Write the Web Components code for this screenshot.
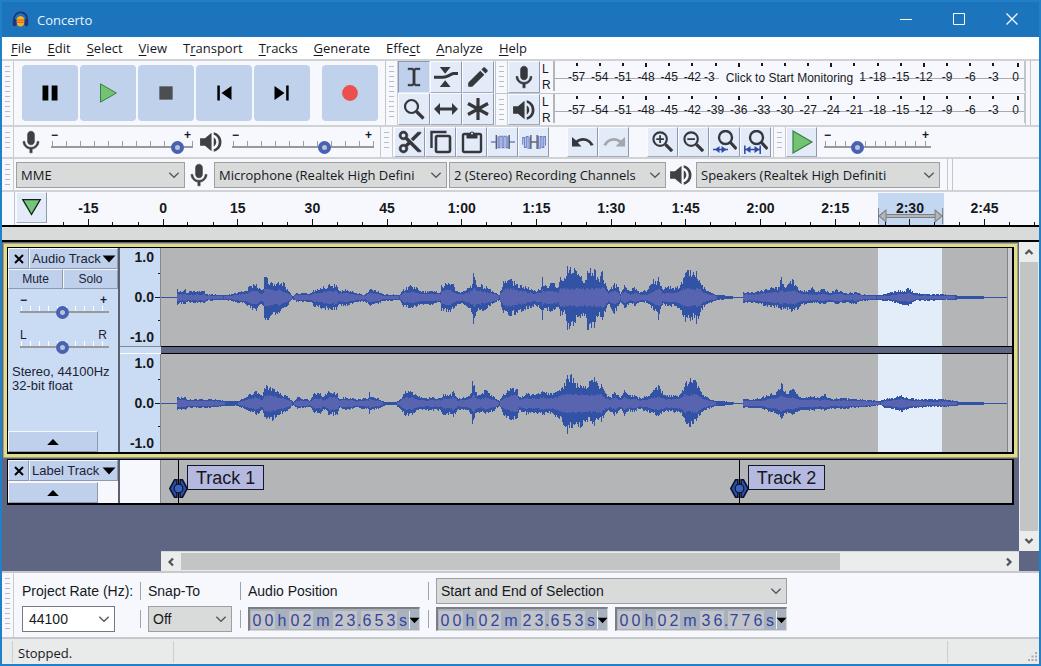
<!DOCTYPE html>
<html lang="en">
<head>
<meta charset="utf-8">
<title>Concerto</title>
<style>
  html, body { margin: 0; height: 100%; }
  body { font: 14px/18px "Liberation Sans", Arial, sans-serif; color: #16181c; }
</style>
</head>
<body>
<concerto-app></concerto-app>

<script>
const UI_FONT = '"Open Sans", "Noto Sans", sans-serif';

/* ---------- icons ---------- */
const box = (inner, vb = '0 0 24 24') => `<svg viewBox="${vb}" fill="currentColor" aria-hidden="true">${inner}</svg>`;
const ICONS = {
  logo: box('<path d="M2.500 14C2.500 6 6.500 2 12 2s9.500 4 9.500 12" fill="none" stroke="#26346f" stroke-width="2.600"/><ellipse cx="12" cy="14.500" rx="6" ry="7.500" fill="#f5b31f"/><path d="M7 13h10M7 16h10" fill="none" stroke="#e8632a" stroke-width="1.800"/><rect x="1" y="11" width="5.500" height="10.500" rx="2.700" fill="#26346f"/><rect x="17.500" y="11" width="5.500" height="10.500" rx="2.700" fill="#26346f"/>'),
  pause: box('<path d="M3 3h7v18H3zM14 3h7v18h-7z"/>'),
  play: box('<path d="M3 1L22 12 3 23z" fill="#72c472" stroke="#3c7d45" stroke-width="1.200"/>'),
  stop: box('<path d="M4 4h16v16H4z" fill="#4b4f52"/>'),
  start: box('<path d="M4 3h3v18H4zM21 3.500v17L9 12z"/>'),
  end: box('<path d="M17 3h3v18h-3zM3 3.500v17l12-8.500z"/>'),
  record: box('<circle cx="12" cy="12" r="9.500" fill="#e9504e"/>'),
  ibeam: box('<path d="M6 3h4.500l1.500 1 1.500-1H18v1.800h-4L13.200 5.500v13l.8.7H18V21h-4.500L12 20l-1.500 1H6v-1.800h4l.8-.7v-13L10 4.800H6z" stroke="currentColor" stroke-width=".4"/>'),
  envelope: box('<path d="M5 0h13L11.500 8zM5 24h13L11.500 16zM-2 10.500H9c5 0 7-3 12-4.500h6v3.500h-5c-5 1.500-7 4.500-13 4.500H-2z"/>', '-2 0 29 24'),
  pencil: box('<path d="M3 17.250V21h3.750L17.810 9.940l-3.750-3.750L3 17.250zM20.710 7.040c.39-.39.39-1.020 0-1.410l-2.340-2.340c-.39-.39-1.020-.39-1.410 0l-1.830 1.830 3.750 3.750 1.830-1.830z"/>', '1 1 22 22'),
  zoom: box('<circle cx="9.500" cy="9.500" r="6.500" fill="none" stroke="currentColor" stroke-width="2.200"/><path d="M14.500 14.500l7 7" stroke="currentColor" stroke-width="3.200"/>'),
  shift: box('<path d="M0 12l6-6v4.500h12V6l6 6-6 6v-4.500H6V18z"/>'),
  multi: box('<path d="M12 1v22M2 6.500l20 11M2 17.500l20-11" stroke="currentColor" stroke-width="3.200" fill="none"/>'),
  mic: box('<path d="M12 14c1.660 0 2.990-1.340 2.990-3L15 5c0-1.660-1.340-3-3-3S9 3.340 9 5v6c0 1.660 1.340 3 3 3zm5.300-3c0 3-2.540 5.100-5.300 5.100S6.700 14 6.700 11H5c0 3.410 2.720 6.230 6 6.720V21h2v-3.280c3.280-.48 6-3.300 6-6.720h-1.700z" stroke="currentColor" stroke-width=".5"/>', '2 1 20 21'),
  speaker: box('<path d="M2 8.500v7h4.500l6 5V3.500l-6 5H2zm14.800 3.500c0-1.770-.8-3.290-2.300-4.030v8.050c1.500-.73 2.300-2.250 2.300-4.020zM14.500 3v2.300c2.900.86 4.600 3.530 4.600 6.700s-1.700 5.850-4.600 6.700V21c4.200-.91 7.100-4.490 7.100-9s-2.900-8.100-7.100-9z"/>', '1 1 22 22'),
  cut: box('<path d="M9.640 7.640c.23-.5.36-1.050.36-1.640 0-2.210-1.790-4-4-4S2 3.790 2 6s1.790 4 4 4c.59 0 1.140-.13 1.640-.36L10 12l-2.360 2.360C7.140 14.130 6.590 14 6 14c-2.210 0-4 1.790-4 4s1.790 4 4 4 4-1.790 4-4c0-.59-.13-1.140-.36-1.640L12 14l7 7h3v-1L9.640 7.640zM6 8c-1.100 0-2-.89-2-2s.9-2 2-2 2 .89 2 2-.9 2-2 2zm0 12c-1.100 0-2-.89-2-2s.9-2 2-2 2 .89 2 2-.9 2-2 2zM19 3l-6 6 2 2 7-7V3z" stroke="currentColor" stroke-width=".6"/>', '1 1 22 22'),
  copy: box('<path d="M2.500 18V2h15" fill="none" stroke="currentColor" stroke-width="2.400"/><rect x="7" y="6" width="14" height="16" rx="1.500" fill="none" stroke="currentColor" stroke-width="2.600"/>', '1 0 22 24'),
  paste: box('<rect x="3" y="4" width="18" height="18" rx="1.500" fill="none" stroke="currentColor" stroke-width="2.400"/><path d="M6.500 3.500H9.500a2.600 2.600 0 0 1 5 0H17.500V8.500H6.500z"/><circle cx="12" cy="3.500" r="1" fill="#e3ebf8"/>', '1 0 22 24'),
  trim: box('<path d="M0 12h6M20 12h7" stroke="#6f82c8" stroke-width="1.600"/><path d="M8 5.500v13h2v-13h2.500v13h2v-13h2.500v13h2v-13" fill="none" stroke="#6578c2" stroke-width="1.300"/><path d="M6 4v16M20.500 4v16" stroke="#596072" stroke-width="1.600"/>', '0 0 27 24'),
  silence: box('<path d="M10 12h7" stroke="#596072" stroke-width="1.600"/><path d="M.8 15V7h2v11h2V6h2v13h2V6M18.500 5v14h2V6h2v12h2V6h2v10" fill="none" stroke="#6f82c8" stroke-width="1.300"/><path d="M10 4v16M17 4v16" stroke="#596072" stroke-width="1.600"/>', '0 0 27 24'),
  undo: box('<path d="M12.500 8c-2.650 0-5.050.99-6.900 2.600L1.500 7v9.500h9.500l-3.620-3.820c1.390-1.160 3.160-1.880 5.120-1.880 3.540 0 6.550 1.810 7.600 5l3-.9C21.080 11.030 17.150 8 12.500 8z"/>', '1 0 23 24'),
  redo: box('<path transform="translate(25 0) scale(-1 1)" fill="#a3a7a9" d="M12.500 8c-2.650 0-5.050.99-6.900 2.600L1.500 7v9.500h9.500l-3.620-3.820c1.390-1.160 3.160-1.880 5.120-1.880 3.540 0 6.550 1.810 7.600 5l3-.9C21.080 11.030 17.150 8 12.500 8z"/>', '1 0 23 24'),
  zoomin: box('<circle cx="9.500" cy="9.500" r="7" fill="none" stroke="currentColor" stroke-width="2.200"/><path d="M15 15l7 7" stroke="currentColor" stroke-width="3.400"/><path d="M5.500 9.500h8M9.500 5.500v8" stroke="currentColor" stroke-width="1.800"/>', '0 0 25 25'),
  zoomout: box('<circle cx="9.500" cy="9.500" r="7" fill="none" stroke="currentColor" stroke-width="2.200"/><path d="M15 15l7 7" stroke="currentColor" stroke-width="3.400"/><path d="M5.500 9.500h8" stroke="currentColor" stroke-width="1.800"/>', '0 0 25 25'),
  zoomsel: box('<circle cx="12.500" cy="8.500" r="6.500" fill="none" stroke="currentColor" stroke-width="2.400"/><path d="M17 13l6.500 7" stroke="currentColor" stroke-width="3.200"/><path d="M0 20.500h15" stroke="#2f4aa5" stroke-width="1.500"/><path d="M6.500 17v7L2 20.500zM8.500 17v7l5-3.500z" fill="#2f4aa5"/>', '0 1 24 24'),
  zoomfit: box('<circle cx="12.500" cy="8.500" r="6.500" fill="none" stroke="currentColor" stroke-width="2.400"/><path d="M17 13l6.500 7" stroke="currentColor" stroke-width="3.200"/><path d="M1 20.500h15M.8 16.500V25M16.200 16.500V25" stroke="#2f4aa5" stroke-width="1.500"/><path d="M1.500 20.500l5-3.500v7zM15.500 20.500l-5-3.500v7z" fill="#2f4aa5"/>', '0 1 24 24'),
  pin: box('<path d="M2 3h20L12 20z" fill="#74c67a" stroke="#17221a" stroke-width="1.500"/>'),
  chevron: box('<path d="M5 8.500l7 7 7-7" fill="none" stroke="#55585b" stroke-width="2"/>'),
  up: box('<path d="M2 17h20L12 7z"/>'),
  down: box('<path d="M1 6h22L12 18z"/>'),
  close: box('<path d="M4 4l16 16M20 4L4 20" stroke="currentColor" stroke-width="4" fill="none"/>'),
  winmin: box('<path d="M6 11.500h12" stroke="#fff" stroke-width="1"/>'),
  winmax: box('<path d="M6.500 5.500h11v11h-11z" fill="none" stroke="#fff" stroke-width="1"/>'),
  winclose: box('<path d="M6.500 5.500l11 11M17.500 5.500l-11 11" stroke="#fff" stroke-width="1.200"/>'),
  arrow: box('<path d="M5 16l7-7 7 7" fill="none" stroke="#505357" stroke-width="4.500"/>'),
  marker: box('<path d="M7 1L1 12l6 11h3V1zM14 1h3l6 11-6 11h-3z" fill="#2c4fa6" stroke="#0c1330" stroke-width="2"/><circle cx="12" cy="12" r="5.500" fill="#3a62b8" stroke="#0c1330" stroke-width="1.500"/>')
};

/* Registers an element whose shadow root is cloned from a template built out of css + html. */
function define(name, css, html) {
  const dynamic = typeof html === 'function';
  const make = markup => {
    const t = document.createElement('template');
    t.innerHTML = `<style>*{box-sizing:border-box}:host{box-sizing:border-box}button,select,input{font:inherit;color:inherit;margin:0}button{padding:0;border:0;background:none}${css}</style>${markup}`;
    return t;
  };
  const shared = dynamic ? null : make(html);
  customElements.define(name, class extends HTMLElement {
    connectedCallback() {
      if (this.shadowRoot) return;
      const root = this.attachShadow({ mode: 'open' });
      root.append((shared || make(html(this))).content.cloneNode(true));
    }
  });
}

define('app-icon', ':host{display:block;flex:none;width:24px;height:24px}svg{display:block;width:100%;height:100%}',
  el => ICONS[el.getAttribute('name')]);

/* ---------- title and menus ---------- */
define('title-bar', `
  :host{display:flex;align-items:center;height:35px;background:#1c75bc;color:#e9f3fb;font:13px/20px ${UI_FONT};padding-left:10px}
  h1{font:inherit;margin:0 0 0 8px;flex:1}
  .logo{width:17px;height:17px}
  button{width:53px;height:35px;display:grid;place-items:center}
  button:last-child{margin-right:1px}`,
  `<app-icon class="logo" name="logo"></app-icon><h1><slot></slot></h1>
   <button aria-label="Minimize"><app-icon name="winmin"></app-icon></button>
   <button aria-label="Maximize"><app-icon name="winmax"></app-icon></button>
   <button aria-label="Close"><app-icon name="winclose"></app-icon></button>`);

define('menu-bar', `
  :host{display:block;background:#fff;font:13px/20px ${UI_FONT}}
  nav{display:flex;gap:16px;height:22px;padding-left:9px}
  u{text-underline-offset:2px}`,
  `<nav>${['File','Edit','Select','View','Transport','Tracks','Generate','Effect','Analyze','Help'].map(t => {
    const i = { Transport: 1, Effect: 4 }[t] || 0;
    return `<button>${t.slice(0, i)}<u>${t[i]}</u>${t.slice(i + 1)}</button>`;
  }).join('')}</nav>`);

/* ---------- toolbars ---------- */
define('tool-bar', `
  :host{display:flex;align-items:stretch;border-left:1px solid #c3c5c8}
  .grip{flex:none;width:12px;border-right:1px solid #c9cbce;padding:5px 3px}
  .grip i{display:block;height:100%;background:repeating-linear-gradient(#b9bcc1 0 1px,transparent 1px 5px)}
  .body{flex:1;min-width:0;display:flex;align-items:center}`,
  '<div class="grip"><i></i></div><div class="body"><slot></slot></div>');

define('tool-button', `
  :host{display:block;flex:none;width:31px;height:100%}
  button{width:100%;height:100%;display:grid;place-items:center;color:#34383c;background:#e3ebf8;border:1px solid #f8fbff;border-right-color:#8f98ad;border-bottom-color:#a2aabb}
  :host([pressed]) button{background:#bfd0ec;border-color:#8f98ad #dfe8f5 #dfe8f5 #8f98ad}
  :host([big]){width:56px;height:56px}
  :host([big]) button{background:#c0d1ec;border:0;border-radius:4px;color:#000}
  app-icon{width:var(--icon,24px);height:var(--icon,24px)}`,
  el => `<button aria-label="${el.getAttribute('label')}"><app-icon name="${el.getAttribute('icon')}"></app-icon></button>`);

define('tick-slider', `
  :host{display:block;flex:0 1 auto;height:24px;font:bold 12px/10px "Liberation Sans",Arial,sans-serif;--tick:#9b9da0;--step:14px}
  :host([low]){font-weight:normal}
  .ends{display:flex;justify-content:space-between;height:11px;padding:0 2px 0 0}
  input{display:block;appearance:none;width:100%;height:13px;background:linear-gradient(90deg,var(--tick) 1px,transparent 1px) 1px 0/var(--step) 6px repeat-x}
  input::-webkit-slider-runnable-track{height:13px;background:linear-gradient(#97999c,#97999c) 0 5px/100% 2px no-repeat}
  input::-webkit-slider-thumb{appearance:none;width:13px;height:13px;border-radius:50%;border:4px solid #4861b0;background:#b8c1da}`,
  el => `<div class="ends" aria-hidden="true"><span>${el.getAttribute('low') || '−'}</span><span>${el.getAttribute('high') || '+'}</span></div>
   <input type="range" min="0" max="100" value="${el.getAttribute('value')}" aria-label="${el.getAttribute('label')}">`);

define('drop-down', `
  :host{display:flex;flex-direction:column;min-width:0}
  label{display:block;height:26px;line-height:26px;margin-bottom:2px;white-space:nowrap}
  .field{display:grid;align-items:center;height:26px;background:#d9dada;border:1px solid #9d9fa1}
  .field>*{grid-area:1/1}
  select{appearance:none;width:100%;height:24px;min-width:0;padding:0 20px 0 4px;border:0;background:none;border-radius:0;text-overflow:ellipsis}
  app-icon{width:16px;height:16px;justify-self:end;margin-right:2px;pointer-events:none}
  :host([editable]) .field{background:#fff;border-color:#77797c;width:93px}
  :host([editable]) select{padding-left:6px}`,
  el => `${el.hasAttribute('label') ? `<label for="s">${el.getAttribute('label')}</label>` : ''}
   <div class="field"><select id="s" aria-label="${el.getAttribute('label') || el.getAttribute('name')}"><option>${el.getAttribute('value')}</option></select><app-icon name="chevron"></app-icon></div>`);

define('level-meter', `
  :host{display:flex;flex:1;min-width:0;height:100%;font-size:12px;line-height:16px}
  .lr{width:13px;padding-left:2px;display:flex;flex-direction:column;justify-content:space-between}
  .lr span{height:16px}
  .scale{position:relative;flex:1;min-width:0;display:grid;grid-template-columns:repeat(19,minmax(0,1fr)) 14px;padding:0 5px 0 10px;border-left:2px solid #b4b6b9;border-right:1px solid #c3c5c8;
    background:linear-gradient(#a9abae,#a9abae) 0 17px/100% 1px no-repeat;margin:0 0 2px}
  .scale span{display:flex;flex-direction:column;align-items:center;gap:3px;padding-top:2px;white-space:nowrap}
  .scale span:last-of-type{align-items:flex-end}
  .scale span::before{content:"";width:2px;height:4px;background:#16181c}
  .scale span:nth-of-type(even)::before,.scale span:nth-of-type(4n+3)::before,.scale span:nth-of-type(4n+1)::before{height:3px;margin-bottom:1px}
  .scale span:nth-of-type(4n)::before{height:4px;margin-bottom:0}
  .scale .cut{align-items:flex-start}
  .scale .cut::before{align-self:center}
  .scale .cut.r b{align-self:flex-end}
  b{font-weight:400}
  .scale b{line-height:14px;height:14px}
  button{position:absolute;left:35%;top:8px;width:30%;height:18px;background:#f6f8fd;white-space:nowrap}`,
  el => {
    /* The idle prompt covers the middle of the scale; only the outer halves of the labels at its edges show. */
    const idle = el.hasAttribute('idle');
    const covered = { 6: '-3', 7: '', 8: '', 9: '', 10: '', 11: '', 12: '1' };
    const cell = i => {
      const part = idle && i in covered;
      return `<span class="${part ? 'cut ' + (i === 12 ? 'r' : '') : ''}"><b>${part ? covered[i] : i === 19 ? 0 : i * 3 - 57}</b></span>`;
    };
    return `<div class="lr"><span>L</span><span>R</span></div>
   <div class="scale">${Array.from({ length: 20 }, (_, i) => cell(i)).join('')}
   ${idle ? '<button>Click to Start Monitoring</button>' : ''}</div>`;
  });

define('time-ruler', `
  :host{display:block;position:relative;flex:1;min-width:0;height:33px;overflow:hidden;font-weight:bold;padding-left:3px}
  .cells{display:flex;height:100%}
  .cells span{flex:0 0 7.56%;text-align:center;padding-top:7px;position:relative;
    background:
     linear-gradient(#16181c,#16181c) 50% 100%/1px 6px no-repeat,
     linear-gradient(#16181c,#16181c) 16.600% 100%/1px 3px no-repeat,
     linear-gradient(#16181c,#16181c) 83.400% 100%/1px 3px no-repeat}
  .sel{position:absolute;left:83.800%;width:6.570%;top:1px;bottom:0;background:#c4d7f0}
  .sel svg{position:absolute;left:0;bottom:1px;width:100%;height:16px}`,
  `<div class="sel"><svg viewBox="0 0 65 16" preserveAspectRatio="none" fill="#b4b6b8" stroke="#7c7f83"><path d="M.5 0v16M64.500 0v16"/><path d="M7 6.500h51v3H7z"/><path d="M1 8l7-6v12zM64 8l-7-6v12z"/></svg></div>
   <div class="cells">${['-15','0','15','30','45','1:00','1:15','1:30','1:45','2:00','2:15','2:30','2:45',''].map(t => `<span>${t}</span>`).join('')}</div>`);

/* ---------- tracks ---------- */
/* Envelopes: [x, peak above the axis, peak below it] in view units. */
const E1 = '0,0,0 15,0,0 16,8,7 18,5,5 24,8,6 26,4,4 29,6,5 43,6,5 45,3,3 62,2,2 71,3,3 77,5,5 84,6,6 89,11,10 95,13,13 99,8,6 102,8,8 103,20,20 106,19,22 111,14,16 116,14,16 122,15,10 126,8,8 131,1,1 135,4,4 149,4,4 152,7,8 159,9,10 167,12,12 175,12,12 177,7,7 184,8,8 191,6,6 195,4,4 204,3,4 209,8,8 217,6,6 221,3,3 238,2,2 242,8,9 249,12,10 255,10,9 259,6,6 269,6,7 279,5,5 280,12,13 287,14,14 292,13,11 295,6,8 301,5,5 307,9,10 311,13,16 312,24,26 313,20,20 315,12,14 321,12,13 329,8,8 338,2,2 342,16,15 349,18,18 356,13,15 364,11,12 374,6,7 380,10,12 381,20,22 382,11,12 391,14,13 397,10,9 399,20,18 404,18,16 406,31,32 409,30,28 414,27,25 419,20,20 424,17,16 426,26,32 433,28,30 437,18,18 441,26,22 444,14,14 447,6,6 453,14,16 457,10,8 459,3,4 463,12,10 469,6,5 473,10,8 479,5,4 486,7,5 492,18,12 496,16,14 497,20,22 501,8,7 507,11,8 514,10,8 519,12,12 524,24,24 529,27,23 533,22,20 535,26,26 539,14,14 544,8,7 551,4,4 556,2,2 561,2,2 569,1,1 575,0,0 581,0,0 582,5,5 594,5,5 604,8,8 609,9,9 617,10,10 620,20,12 624,9,11 631,18,13 636,10,12 639,7,8 645,6,6 651,10,5 655,5,5 662,8,6 669,4,4 675,8,6 684,4,5 695,5,6 699,3,3 715,2,2 723,3,3 729,5,3 739,7,6 743,6,7 747,9,8 754,4,3 764,3,3 784,3,2 794,2,2 799,1,1 822,1,1 823,0,0 846,0,0';
const E2 = '0,0,0 15,0,0 16,6,6 24,6,6 27,3,3 29,4,4 49,4,4 64,2,2 76,2,2 79,3,3 89,9,8 95,12,11 101,7,6 103,15,13 106,17,14 111,15,17 119,10,10 126,7,7 132,1,1 136,6,5 149,3,3 152,9,8 159,10,10 162,6,5 167,12,11 176,10,11 178,4,4 184,6,6 191,5,5 195,3,3 202,5,5 207,5,5 208,11,10 210,6,6 217,5,5 222,2,2 226,1,1 234,1,1 239,4,5 244,12,12 251,11,11 256,7,6 264,5,6 272,6,7 279,5,6 282,9,11 289,9,10 292,12,13 296,5,6 305,6,6 310,10,10 311,22,20 313,18,14 314,11,9 319,8,8 324,13,10 332,7,7 338,2,2 342,9,11 349,15,16 356,14,14 358,6,6 365,10,11 374,8,8 381,12,11 387,10,9 393,10,11 397,12,14 401,16,18 403,20,22 406,28,30 410,29,24 414,20,20 419,18,24 424,17,18 429,22,17 433,26,22 437,17,16 440,19,18 444,10,9 449,6,8 453,11,12 457,8,7 459,5,5 463,13,12 467,8,7 471,8,8 479,5,5 489,9,9 497,18,12 504,8,7 512,8,8 519,9,9 524,20,18 529,25,23 532,23,20 535,21,17 539,12,11 545,6,6 551,3,3 555,2,2 561,2,2 570,1,1 575,0,0 581,0,0 582,4,4 594,4,4 601,6,5 609,9,8 615,11,10 620,20,15 625,9,10 631,14,11 639,6,6 647,6,6 653,7,7 657,5,5 663,9,7 670,4,5 679,5,5 694,4,4 709,3,3 719,2,1 723,4,4 731,5,5 740,8,8 746,5,5 754,4,4 765,4,3 784,4,3 796,2,2 797,1,1 822,1,1 823,0,0 846,0,0';

function envelopePaths(data, seed) {
  const pts = data.split(' ').map(p => p.split(',').map(Number));
  let s = seed, k = 0;
  const rnd = () => (s = (s * 16807) % 2147483647) / 2147483647;
  const col = { peak: '', rms: '' };
  for (let x = 0; x < 846; x++) {
    while (pts[k + 1][0] <= x && k < pts.length - 2) k++;
    const [a, b] = [pts[k], pts[k + 1]], t = Math.min(1, (x - a[0]) / (b[0] - a[0]));
    const mix = i => a[i] + (b[i] - a[i]) * t;
    const jag = () => x === a[0] ? 1 : 0.72 + rnd() * 0.36;
    const u = mix(1), d = mix(2);
    const up = Math.round(u * jag()), dn = Math.round(d * jag());
    col.peak += `M${x} ${49 - up}h1v${up + dn + 1}h-1z`;
    if (u > 2) {
      const r = Math.round(Math.min(u, d, 17) * (0.42 + rnd() * 0.14));
      col.rms += `M${x} ${49 - r}h1v${2 * r + 1}h-1z`;
    }
  }
  return col;
}

define('wave-channel', `
  :host{display:block;height:98px;background:#b3b5b6}
  svg{display:block;width:100%;height:98px}`,
  el => {
    const p = envelopePaths(el.getAttribute('data') === '2' ? E2 : E1, el.getAttribute('data') === '2' ? 911 : 337);
    return `<svg viewBox="0 0 851 98" preserveAspectRatio="none" shape-rendering="crispEdges" role="img" aria-label="Waveform">
      <rect x="717" width="64" height="98" fill="#e3ecf9"/><rect x="847" width="4" height="98" fill="#cdccd0"/>
      <path d="M846 0h1v98h-1z" fill="#808285"/><path d="${p.peak}" fill="#3252a6"/><path d="${p.rms}" fill="#5964b0"/></svg>`;
  });

define('level-ruler', `
  :host{display:flex;flex-direction:column;justify-content:space-between;height:98px;font-weight:bold;text-align:right;padding-right:6px;border-right:1px solid #85898e;
    background:linear-gradient(#16181c,#16181c) 100% 49px/5px 1px no-repeat,linear-gradient(#16181c,#16181c) 100% 25px/2px 1px no-repeat,linear-gradient(#16181c,#16181c) 100% 72px/2px 1px no-repeat,#cadcf3}`,
  '<span>1.0</span><span>0.0</span><span>-1.0</span>');

define('track-head', `
  :host{display:flex;flex-direction:column;background:#cadcf3;border-right:2px solid #5b6070;font-size:12px;line-height:16px;color:#1c2233}
  .row{display:flex;height:21px;flex:none}
  button{display:flex;align-items:center;justify-content:center;background:#bfd0ec;border:1px solid #f4f8fd;border-right-color:#8f98ad;border-bottom-color:#8f98ad;height:100%}
  .x{width:21px}
  .name{flex:1;justify-content:space-between;padding:0 1px 0 2px;white-space:nowrap;font-size:13px}
  .collapse{width:90px;height:21px;margin-top:auto;flex:none}
  app-icon{width:12px;height:12px;color:#000}
  .name app-icon,.collapse app-icon{width:14px;height:14px}`,
  `<div class="row"><button class="x" aria-label="Close track"><app-icon name="close"></app-icon></button>
   <button class="name"><slot name="title"></slot><app-icon name="down"></app-icon></button></div>
   <slot></slot><button class="collapse" aria-label="Collapse"><app-icon name="up"></app-icon></button>`);

define('audio-track', `
  :host{display:block;border:1px solid #a3a274;background:#e0dc8e;padding:3px}
  .frame{display:grid;grid-template-columns:112px 41px minmax(0,1fr);border:solid #000;border-width:1px 2px 2px 1px}
  .split{height:8px;background:#5f6684;border:solid #000;border-width:1px 0}
  .gap{height:8px;background:#cadcf3;border-top:1px solid #85898e;border-bottom:1px solid #fff}
  .ms{display:flex;height:20px;flex:none}
  .ms button{flex:1;background:#bfd0ec;border:1px solid #f4f8fd;border-right-color:#8f98ad;border-bottom-color:#8f98ad}
  tick-slider{margin:6px 9px 0 12px;--tick:#fff;--step:9px}
  tick-slider+tick-slider{margin-top:11px}
  p{margin:11px 0 0 4px;line-height:14px;font-size:13px;white-space:nowrap}`,
  `<div class="frame"><track-head><span slot="title">Audio Track</span>
     <div class="ms"><button>Mute</button><button>Solo</button></div>
     <tick-slider label="Gain" value="47"></tick-slider>
     <tick-slider label="Pan" low="L" high="R" value="47"></tick-slider>
     <p>Stereo, 44100Hz<br>32-bit float</p></track-head>
   <div><level-ruler></level-ruler><div class="gap"></div><level-ruler></level-ruler></div>
   <div><wave-channel data="1"></wave-channel><div class="split"></div><wave-channel data="2"></wave-channel></div></div>`);

define('text-label', `
  :host{position:absolute;top:0;bottom:0;display:flex;align-items:flex-start;transform:translateX(-8px)}
  .pin{width:17px;height:100%;position:relative;background:linear-gradient(#000,#000) 8px 0/1px 100% no-repeat}
  app-icon{width:19px;height:21px;position:absolute;left:-1px;top:18px}
  .txt{margin-top:5px;height:25px;padding:0 8px;border:1px solid #111628;background:#b5b9e0;font-size:18px;line-height:24px;white-space:nowrap}`,
  '<div class="pin"><app-icon name="marker"></app-icon></div><div class="txt"><slot></slot></div>');

define('label-track', `
  :host{display:block;margin:1px 4px 0}
  .frame{display:grid;grid-template-columns:112px 41px minmax(0,1fr);height:46px;border:solid #000;border-width:1px 2px 2px 1px}
  track-head{background:#f6f8fd}
  .blank{background:#f6f8fd;border-right:1px solid #85898e}
  .lane{position:relative;background:#b3b5b6}`,
  `<div class="frame"><track-head><span slot="title">Label Track</span></track-head><div class="blank"></div>
   <div class="lane"><text-label style="left:2%">Track 1</text-label><text-label style="left:67.900%">Track 2</text-label></div></div>`);

define('scroll-bar', `
  :host{display:flex;background:#ebecec}
  :host([vertical]){flex-direction:column}
  button{flex:none;width:20px;height:20px;display:grid;place-items:center}
  app-icon{width:12px;height:12px}
  .thumb{background:#c3c5c5;flex:0 0 auto}
  .track{flex:1;display:flex;padding:1px 0}
  .track .thumb{width:80.600%}
  :host([vertical]) .track{padding:0 1px}
  :host([vertical]) .track .thumb{width:100%;height:100%}
  .l{transform:rotate(-90deg)}.r{transform:rotate(90deg)}.d{transform:rotate(180deg)}`,
  el => { const v = el.hasAttribute('vertical'); return `<button aria-label="Back"><app-icon class="${v ? '' : 'l'}" name="arrow"></app-icon></button>
   <div class="track"><div class="thumb"></div></div><button aria-label="Forward"><app-icon class="${v ? 'd' : 'r'}" name="arrow"></app-icon></button>`; });

/* ---------- selection bar ---------- */
define('time-field', `
  :host{display:flex;flex-direction:column}
  .t{height:26px;line-height:26px;margin-bottom:2px}
  .f{display:flex;width:172px;height:24px;margin-top:1px;border:2px solid #7b7e82;border-right:1px solid #d5d7d9;border-bottom:1px solid #d5d7d9;background:#a9b1bf;padding:2px 0 1px 1px;color:#3246a0;font-size:16px;line-height:19px}
  .f span{text-align:center;flex:none}
  .d{width:12px;background:#c2c4c7}
  .h{width:14px}.m{width:20px}.p{width:4px}.s{width:12px}
  button{flex:1;border-left:1px solid #f0f2f5;display:flex;align-items:center;justify-content:center}
  app-icon{width:11px;height:11px;color:#000;margin:0 -2px}`,
  el => `${el.hasAttribute('label') ? `<div class="t">${el.getAttribute('label')}</div>` : ''}<div class="f" role="group" aria-label="${el.getAttribute('label') || el.getAttribute('name')}">${
    [...el.getAttribute('value')].map(c => `<span class="${/\d/.test(c) ? 'd' : c === '.' ? 'p' : c}">${c}</span>`).join('')
  }<button aria-label="Format"><app-icon name="down"></app-icon></button></div>`);

define('bar-split', ':host{display:flex;flex-direction:column;gap:10px;padding:4px 0 0 1px}i{width:1px;height:18px;background:#9fa2a6}', '<i></i><i></i>');

define('status-bar', `
  :host{display:flex;height:27px;flex:none;background:#e9eaea;border-top:2px solid #c6c8ca;font:13px/24px ${UI_FONT}}
  div{border-right:1px solid #cbcdce;margin:2px 0 1px}
  .a{width:11px}.b{width:161px;padding-left:5px}.c{flex:1}
  .d{width:91px;border:0;display:flex;align-items:flex-end;justify-content:flex-end;padding:0 2px 2px 0}
  svg{width:9px;height:9px}`,
  `<div class="a"></div><div class="b"><slot></slot></div><div class="c"></div><div class="d"><svg viewBox="0 0 9 9" fill="#a9abad"><path d="M7 0h2v2H7zM7 3.500h2v2H7zM7 7h2v2H7zM3.500 3.500h2v2h-2zM3.500 7h2v2h-2zM0 7h2v2H0z"/></svg></div>`);

/* ---------- the window ---------- */
const btn = (icon, label, extra = '') => `<tool-button icon="${icon}" label="${label}" ${extra}></tool-button>`;
define('concerto-app', `
  :host{display:flex;flex-direction:column;min-height:100vh;border:2px solid #2180c6;background:#f6f8fd}
  .row{display:flex;flex:none;border-top:2px solid #d0d2d4}
  .r1{height:66px}.r2{height:32px}.r3{height:33px;font:13px/20px ${UI_FONT}}
  tool-bar{flex:none}
  .row>tool-bar:first-child{border-left:0}
  .transport{display:flex;gap:2px;padding:0 7px 0 8px;--icon:20px}
  .transport tool-button:last-child{margin-left:10px}
  .tools{display:grid;grid-template-columns:repeat(3,32px);grid-template-rows:32px 32px;margin-right:1px}
  .tools tool-button,.meters tool-button{width:32px;--icon:24px}
  .meters{flex:1;min-width:0}
  .meters tool-bar{height:32px}
  .meters tool-bar+tool-bar{border-top:1px solid #c3c5c8}
  .tail{width:14px;border:solid #c3c5c8;border-width:0 0 0 1px;display:flex}
  .tail::before{content:"";width:4px;border-right:1px solid #c3c5c8}
  .cap{color:#3d4144}
  .edit{display:flex;height:30px;--icon:24px;padding:0 2px 0 1px}
  .edit .sp{margin-left:18px}
  .r2 tick-slider{width:142px}
  .corner{width:13px;border-right:1px solid #c3c5c8}
  .pinned{width:32px;height:31px;margin-left:1px;--icon:21px}
  .r4{border-bottom:2px solid #000;height:37px}
  .lane{height:13px;flex:none;background:#d9dada}
  .space{flex:1;display:grid;grid-template-columns:minmax(0,1fr) 20px;grid-template-rows:1fr 20px;background:#5f6684;border-top:2px solid #000}
  .tracks{padding:1px 1px 0 1px;min-width:0}
  .hs{margin-left:159px;border-top:1px solid #d5d7d9}
  .bottom{height:66px;border-top:2px solid #c6c8ca}
  .sel{display:flex;gap:7px;padding:0 0 0 8px;align-items:flex-start}
  .sel>.rate{width:110px}.sel>.snap{width:84px}
  .range{display:flex;flex-direction:column;gap:2px}
  .range div{display:flex;gap:7px}`,
  `<title-bar>Concerto</title-bar><menu-bar></menu-bar>
  <div class="row r1">
    <tool-bar><div class="transport">${btn('pause','Pause','big')}${btn('play','Play','big')}${btn('stop','Stop','big')}${btn('start','Skip to Start','big')}${btn('end','Skip to End','big')}${btn('record','Record','big')}</div></tool-bar>
    <tool-bar><div class="tools">${btn('ibeam','Selection Tool','pressed')}${btn('envelope','Envelope Tool')}${btn('pencil','Draw Tool')}${btn('zoom','Zoom Tool')}${btn('shift','Time Shift Tool')}${btn('multi','Multi Tool')}</div></tool-bar>
    <div class="meters"><tool-bar>${btn('mic','Recording Meter')}<level-meter idle></level-meter></tool-bar><tool-bar>${btn('speaker','Playback Meter')}<level-meter></level-meter></tool-bar></div>
    <div class="tail"></div>
  </div>
  <div class="row r2">
    <tool-bar><app-icon class="cap" name="mic" style="margin:0 8px 0 5px"></app-icon><tick-slider label="Recording Volume" value="93"></tick-slider><app-icon class="cap" name="speaker" style="margin:0 9px 0 6px"></app-icon><tick-slider label="Playback Volume" value="67" style="margin-right:6px"></tick-slider></tool-bar>
    <tool-bar><div class="edit">${btn('cut','Cut')}${btn('copy','Copy')}${btn('paste','Paste')}${btn('trim','Trim')}${btn('silence','Silence')}${btn('undo','Undo','class="sp"')}${btn('redo','Redo')}${btn('zoomin','Zoom In','class="sp"')}${btn('zoomout','Zoom Out')}${btn('zoomsel','Zoom to Selection')}${btn('zoomfit','Fit Project')}</div></tool-bar>
    <tool-bar>${btn('play','Play at Speed')}<tick-slider label="Playback Speed" value="29" style="width:107px;margin-left:7px;--step:10px"></tick-slider></tool-bar>
  </div>
  <div class="row r3">
    <tool-bar><drop-down name="Audio Host" value="MME" style="width:169px;margin-left:2px"></drop-down><app-icon class="cap" name="mic" style="margin:0 3px 0 2px"></app-icon><drop-down name="Recording Device" value="Microphone (Realtek High Defini" style="width:233px;margin-right:2px"></drop-down><drop-down name="Recording Channels" value="2 (Stereo) Recording Channels" style="width:217px"></drop-down><app-icon class="cap" name="speaker" style="margin:0 3px"></app-icon><drop-down name="Playback Device" value="Speakers (Realtek High Definiti" style="width:244px;margin-right:7px"></drop-down></tool-bar>
    <div class="tail"></div>
  </div>
  <div class="row r4"><div class="corner"></div><div class="pinned">${btn('pin','Pinned Play Head')}</div><time-ruler></time-ruler></div>
  <div class="lane"></div>
  <main class="space"><div class="tracks"><audio-track></audio-track><label-track></label-track></div><scroll-bar vertical></scroll-bar><scroll-bar class="hs"></scroll-bar></main>
  <div class="row bottom"><tool-bar><div class="sel">
    <drop-down class="rate" editable label="Project Rate (Hz):" value="44100"></drop-down><bar-split></bar-split>
    <drop-down class="snap" label="Snap-To" value="Off"></drop-down><bar-split></bar-split>
    <time-field label="Audio Position" value="00h02m23.653s"></time-field><bar-split></bar-split>
    <div class="range"><drop-down name="Selection Mode" value="Start and End of Selection"></drop-down><div><time-field name="Selection Start" value="00h02m23.653s"></time-field><time-field name="Selection End" value="00h02m36.776s"></time-field></div></div>
  </div></tool-bar></div>
  <status-bar>Stopped.</status-bar>`);
</script>
</body>
</html>
